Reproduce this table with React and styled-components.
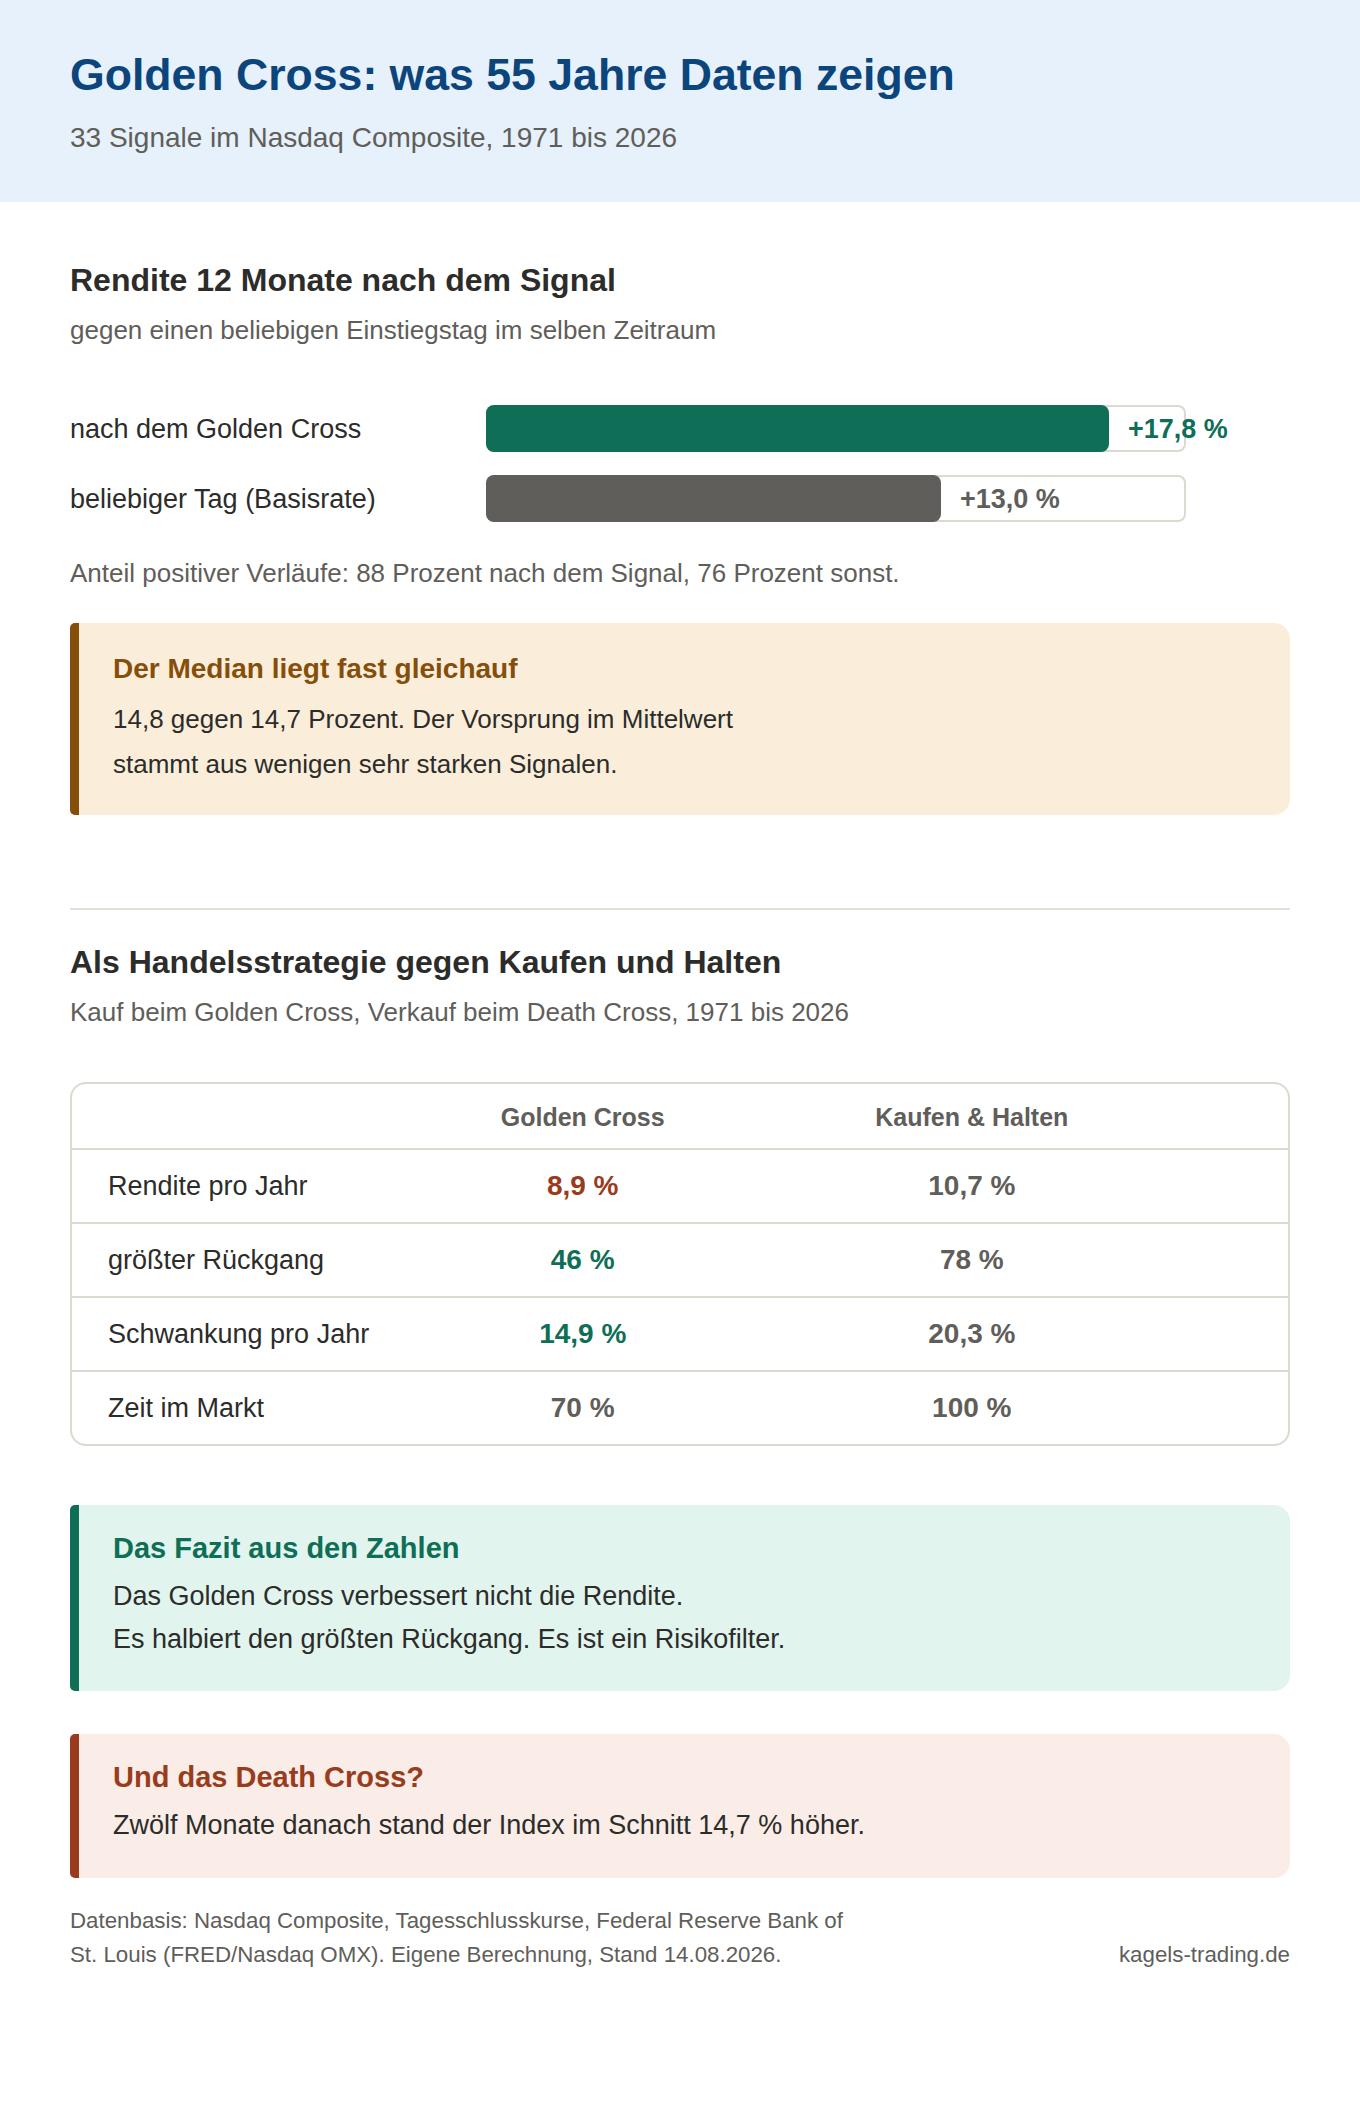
import React from "react";
import styled, { createGlobalStyle } from "styled-components";

const GlobalStyle = createGlobalStyle`
  * { box-sizing: border-box; }
  html, body { margin: 0; padding: 0; background: #ffffff; }
  body {
    font-family: "Liberation Sans", Arial, Helvetica, sans-serif;
    color: #2c2c2a;
    -webkit-font-smoothing: antialiased;
  }
`;

const Page = styled.div`
  width: 1360px;
  min-height: 2118px;
  background: #ffffff;
`;

const Header = styled.header`
  background: #e6f1fb;
  padding: 48px 70px 45px;
`;

const Title = styled.h1`
  margin: 0;
  font-size: 44.6px;
  line-height: 1.2;
  font-weight: 700;
  color: #0c447c;
`;

const Lead = styled.p`
  margin: 16px 0 0;
  font-size: 28px;
  line-height: 1.4;
  color: #5f5e5a;
`;

const Main = styled.main`
  padding: 58px 70px 0;
`;

const Section = styled.section`
  display: flex;
  flex-direction: column;
`;

const H2 = styled.h2`
  margin: ${(p) => (p.$top ? `${p.$top}px` : 0)} 0 0;
  font-size: 32px;
  line-height: 40px;
  font-weight: 700;
  color: #2c2c2a;
`;

const Sub = styled.p`
  margin: 12px 0 0;
  font-size: 26px;
  line-height: 36.4px;
  color: #5f5e5a;
`;

const Bars = styled.div`
  margin-top: 57px;
  display: flex;
  flex-direction: column;
  gap: 23px;
`;

const BarRow = styled.div`
  display: grid;
  grid-template-columns: 416px 700px;
  align-items: center;
`;

const BarLabel = styled.span`
  font-size: 27px;
  line-height: 36px;
  color: #2c2c2a;
`;

const Track = styled.div`
  position: relative;
  height: 47px;
  border-radius: 8px;
  background: #ffffff;
  box-shadow: inset 0 0 0 2px #dcd9d0;
`;

const Fill = styled.div`
  height: 100%;
  border-radius: 8px;
  background: ${(p) => p.$color};
`;

const BarValue = styled.span`
  position: absolute;
  top: 50%;
  transform: translateY(-50%);
  white-space: nowrap;
  font-size: 27px;
  font-weight: 700;
  line-height: 1;
  color: ${(p) => p.$color};
`;

const Note = styled.p`
  margin: 33px 0 0;
  font-size: 26px;
  line-height: 36.4px;
  color: #5f5e5a;
`;

const Callout = styled.div`
  margin-top: ${(p) => p.$mt}px;
  background: ${(p) => p.$bg};
  border-left: 9px solid ${(p) => p.$accent};
  border-radius: 5px 16px 16px 5px;
  padding: ${(p) => p.$pt}px 40px ${(p) => p.$pb}px 34px;
`;

const CalloutTitle = styled.h3`
  margin: 0 0 ${(p) => p.$gap}px;
  font-size: ${(p) => p.$size}px;
  line-height: 1.3;
  font-weight: 700;
  color: ${(p) => p.$color};
`;

const CalloutText = styled.p`
  margin: 0;
  font-size: ${(p) => p.$size}px;
  line-height: ${(p) => p.$lh}px;
  color: #2c2c2a;
`;

const Divider = styled.hr`
  margin: 93px 0 0;
  border: 0;
  height: 2px;
  background: #e2dfd8;
`;

const Table = styled.div`
  margin-top: 52px;
  border: 2px solid #dcd9d0;
  border-radius: 16px;
  overflow: hidden;
`;

const Row = styled.div`
  display: grid;
  grid-template-columns: 26% 32% 32% 10%;
  align-items: center;
  height: ${(p) => (p.$head ? 64 : 74)}px;
  border-top: ${(p) => (p.$head ? "0" : "2px solid #dcd9d0")};
`;

const HeadCell = styled.div`
  text-align: center;
  font-size: 25px;
  font-weight: 700;
  color: #5f5e5a;
  padding-top: 3px;
`;

const LabelCell = styled.div`
  padding-left: 36px;
  font-size: 27px;
  color: #2c2c2a;
`;

const ValueCell = styled.div`
  text-align: center;
  font-size: 28px;
  font-weight: 700;
  color: ${(p) => p.$color || "#5f5e5a"};
`;

const Footer = styled.footer`
  margin-top: 26px;
  display: flex;
  justify-content: space-between;
  align-items: flex-end;
  font-size: 22.3px;
  line-height: 34px;
  color: #5f5e5a;
`;

const FootNote = styled.p`
  margin: 0;
`;

const Site = styled.span`
  white-space: nowrap;
`;

const GREEN = "#0f6e56";
const GRAY = "#5f5e5a";
const RED = "#993c1d";

const bars = [
  { label: "nach dem Golden Cross", value: 17.8, text: "+17,8 %", color: GREEN },
  { label: "beliebiger Tag (Basisrate)", value: 13.0, text: "+13,0 %", color: GRAY },
];

const rows = [
  { label: "Rendite pro Jahr", gc: "8,9 %", gcColor: RED, bh: "10,7 %" },
  { label: "größter Rückgang", gc: "46 %", gcColor: GREEN, bh: "78 %" },
  { label: "Schwankung pro Jahr", gc: "14,9 %", gcColor: GREEN, bh: "20,3 %" },
  { label: "Zeit im Markt", gc: "70 %", gcColor: GRAY, bh: "100 %" },
];

const MAX = 20;

export default function App() {
  return (
    <Page>
      <GlobalStyle />
      <Header>
        <Title>Golden Cross: was 55 Jahre Daten zeigen</Title>
        <Lead>33 Signale im Nasdaq Composite, 1971 bis 2026</Lead>
      </Header>
      <Main>
        <Section>
          <H2>Rendite 12 Monate nach dem Signal</H2>
          <Sub>gegen einen beliebigen Einstiegstag im selben Zeitraum</Sub>
          <Bars>
            {bars.map((b) => {
              const pct = (b.value / MAX) * 100;
              return (
                <BarRow key={b.label}>
                  <BarLabel>{b.label}</BarLabel>
                  <Track>
                    <Fill $color={b.color} style={{ width: `${pct}%` }} />
                    <BarValue $color={b.color} style={{ left: `calc(${pct}% + 19px)` }}>
                      {b.text}
                    </BarValue>
                  </Track>
                </BarRow>
              );
            })}
          </Bars>
          <Note>Anteil positiver Verläufe: 88 Prozent nach dem Signal, 76 Prozent sonst.</Note>
          <Callout $mt={31} $bg="#faeeda" $accent="#854f0b" $pt={28} $pb={28}>
            <CalloutTitle $color="#854f0b" $size={28} $gap={10}>
              Der Median liegt fast gleichauf
            </CalloutTitle>
            <CalloutText $size={26} $lh={45}>
              14,8 gegen 14,7 Prozent. Der Vorsprung im Mittelwert
              <br />
              stammt aus wenigen sehr starken Signalen.
            </CalloutText>
          </Callout>
        </Section>

        <Divider />

        <Section>
          <H2 $top={32}>Als Handelsstrategie gegen Kaufen und Halten</H2>
          <Sub>Kauf beim Golden Cross, Verkauf beim Death Cross, 1971 bis 2026</Sub>
          <Table>
            <Row $head>
              <div />
              <HeadCell>Golden Cross</HeadCell>
              <HeadCell>Kaufen &amp; Halten</HeadCell>
              <div />
            </Row>
            {rows.map((r) => (
              <Row key={r.label}>
                <LabelCell>{r.label}</LabelCell>
                <ValueCell $color={r.gcColor}>{r.gc}</ValueCell>
                <ValueCell>{r.bh}</ValueCell>
                <div />
              </Row>
            ))}
          </Table>
          <Callout $mt={59} $bg="#e1f5ee" $accent={GREEN} $pt={25} $pb={31}>
            <CalloutTitle $color={GREEN} $size={29} $gap={7}>
              Das Fazit aus den Zahlen
            </CalloutTitle>
            <CalloutText $size={27} $lh={42.7}>
              Das Golden Cross verbessert nicht die Rendite.
              <br />
              Es halbiert den größten Rückgang. Es ist ein Risikofilter.
            </CalloutText>
          </Callout>
          <Callout $mt={43} $bg="#faece7" $accent={RED} $pt={25} $pb={31}>
            <CalloutTitle $color={RED} $size={29} $gap={7}>
              Und das Death Cross?
            </CalloutTitle>
            <CalloutText $size={27} $lh={42.7}>
              Zwölf Monate danach stand der Index im Schnitt 14,7 % höher.
            </CalloutText>
          </Callout>
        </Section>

        <Footer>
          <FootNote>
            Datenbasis: Nasdaq Composite, Tagesschlusskurse, Federal Reserve Bank of
            <br />
            St. Louis (FRED/Nasdaq OMX). Eigene Berechnung, Stand 14.08.2026.
          </FootNote>
          <Site>kagels-trading.de</Site>
        </Footer>
      </Main>
    </Page>
  );
}
